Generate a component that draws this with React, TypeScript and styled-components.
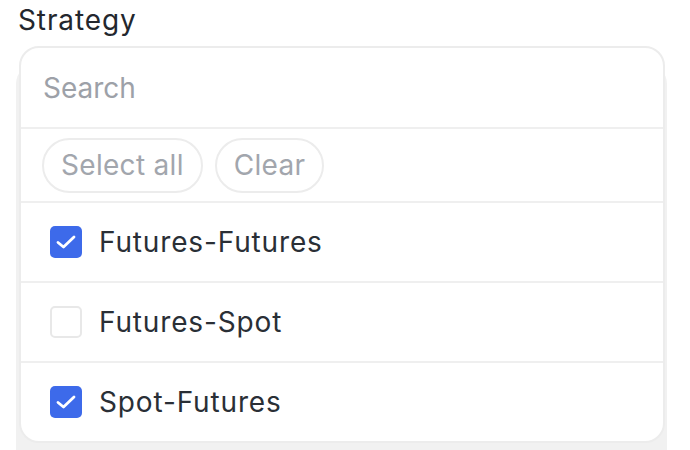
import React, { useState } from 'react';
import styled, { createGlobalStyle } from 'styled-components';

const GlobalStyle = createGlobalStyle`
  html, body {
    margin: 0;
    padding: 0;
    background: #fff;
    font-family: Inter, "Noto Sans", "Liberation Sans", sans-serif;
  }
`;

const Page = styled.div`
  padding: 0 18px;
  height: 450px;
  overflow: hidden;
`;

const Label = styled.div`
  font-size: 28px;
  line-height: 34px;
  color: #23272e;
  padding-top: 3px;
  height: 43px;
  letter-spacing: 0.9px;
`;

const Field = styled.div`
  position: relative;
  padding-top: 18px;
`;

const Trigger = styled.div`
  margin-left: -2px;
  width: 651px;
  height: 420px;
  background: #f1f1f1;
  border-radius: 20px;
`;

const Panel = styled.div`
  position: absolute;
  top: 0;
  left: 1px;
  width: 646px;
  box-sizing: border-box;
  background: #fff;
  border: 2px solid #ececec;
  border-radius: 20px;
  overflow: hidden;
`;

const SearchRow = styled.div`
  height: 79px;
  display: flex;
  align-items: center;
  padding: 0 22px;
  border-bottom: 2px solid #efefef;
`;

const SearchInput = styled.input`
  border: none;
  outline: none;
  width: 100%;
  font-family: inherit;
  font-size: 28px;
  color: #2b3038;
  background: transparent;
  padding: 0;
  &::placeholder {
    color: #9da1a8;
  }
`;

const Actions = styled.div`
  height: 72px;
  display: flex;
  align-items: center;
  gap: 12px;
  padding: 0 21px;
  border-bottom: 2px solid #efefef;
`;

const Pill = styled.button`
  height: 55px;
  padding: 0 17px;
  border: 2px solid #ececec;
  border-radius: 28px;
  background: #fff;
  font-family: inherit;
  font-size: 28px;
  color: #a2a6ad;
  letter-spacing: 0.3px;
`;

const Option = styled.label<{ $last?: boolean }>`
  height: 78px;
  display: flex;
  align-items: center;
  gap: 17px;
  padding: 0 29px;
  border-bottom: ${(p) => (p.$last ? 'none' : '2px solid #efefef')};
  font-size: 28px;
  color: #2a2f36;
  letter-spacing: 0.85px;
  cursor: pointer;
`;

const Box = styled.span<{ $checked: boolean }>`
  width: 32px;
  height: 32px;
  box-sizing: border-box;
  border-radius: 5px;
  display: flex;
  align-items: center;
  justify-content: center;
  background: ${(p) => (p.$checked ? '#3d6aea' : '#fff')};
  border: ${(p) => (p.$checked ? 'none' : '2px solid #e8e8e8')};
`;

const options = ['Futures-Futures', 'Futures-Spot', 'Spot-Futures'];

export default function App() {
  const [checked, setChecked] = useState<Record<string, boolean>>({
    'Futures-Futures': true,
    'Futures-Spot': false,
    'Spot-Futures': true,
  });

  const toggle = (name: string) => setChecked({ ...checked, [name]: !checked[name] });

  return (
    <Page>
      <GlobalStyle />
      <Label>Strategy</Label>
      <Field>
        <Trigger />
        <Panel>
          <SearchRow>
            <SearchInput placeholder="Search" />
          </SearchRow>
          <Actions>
            <Pill>Select all</Pill>
            <Pill>Clear</Pill>
          </Actions>
          {options.map((name, i) => (
            <Option key={name} $last={i === options.length - 1} onClick={() => toggle(name)}>
              <Box $checked={checked[name]}>
                {checked[name] && (
                  <svg width="22" height="16" viewBox="0 0 22 16" fill="none">
                    <path d="M3 8.5L8.5 13L19 3" stroke="#fff" strokeWidth="2.8" strokeLinecap="round" strokeLinejoin="round" />
                  </svg>
                )}
              </Box>
              {name}
            </Option>
          ))}
        </Panel>
      </Field>
    </Page>
  );
}
